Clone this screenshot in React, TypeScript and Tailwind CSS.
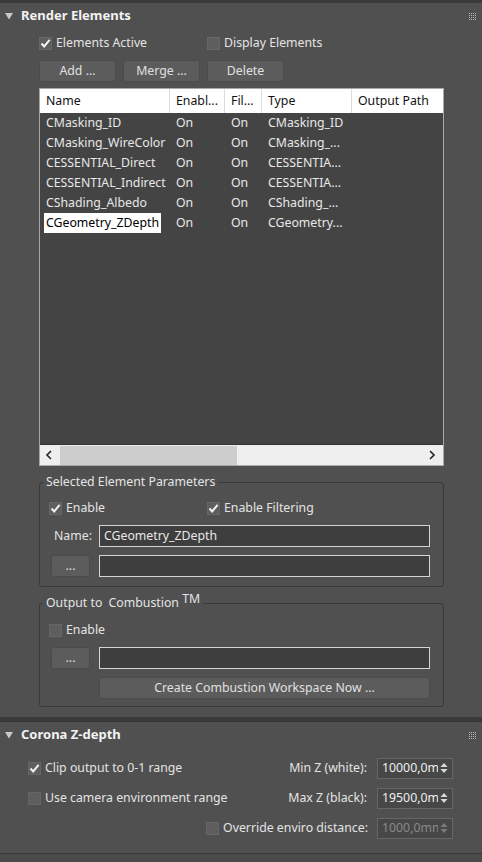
import React from 'react'

const font = { fontFamily: '"Noto Sans", "Open Sans", sans-serif' }

function Check({ checked, disabled }: { checked?: boolean; disabled?: boolean }) {
    return (
        <div className="w-[13px] h-[13px] shrink-0 bg-[#5e5e5e] border border-[#666] flex items-center justify-center">
            {checked && (
                <svg width="11" height="11" viewBox="0 0 11 11">
                    <path d="M1.5 5.5 L4.2 8.4 L9.6 1.8" stroke={disabled ? '#999' : '#f2f2f2'} strokeWidth="2" fill="none" />
                </svg>
            )}
        </div>
    )
}

function CheckRow({ label, checked, className = '' }: { label: string; checked?: boolean; className?: string }) {
    return (
        <div className={`flex items-center gap-[4px] h-[20px] ${className}`}>
            <Check checked={checked} />
            <span className="text-[12.3px] text-[#e4e4e4]">{label}</span>
        </div>
    )
}

function Btn({ label, className = '' }: { label: string; className?: string }) {
    return (
        <div className={`h-[22px] bg-[#5c5c5c] border border-[#4b4b4b] rounded-[3px] flex items-center justify-center text-[12.3px] text-[#e0e0e0] ${className}`}>
            {label}
        </div>
    )
}

function TextBox({ value = '', className = '' }: { value?: string; className?: string }) {
    return (
        <div className={`h-[22px] bg-[#3e3e3e] border border-[#d4d4d4] flex items-center px-[4px] text-[12.3px] text-[#e8e8e8] ${className}`}>
            {value}
        </div>
    )
}

function Spinner({ value, disabled }: { value: string; disabled?: boolean }) {
    return (
        <div className={`w-[76px] h-[21px] bg-[#474747] border border-[#666] flex items-center pl-[4px] pr-[4px] ${disabled ? 'text-[#8a8a8a]' : 'text-[#eeeeee]'}`}>
            <span className="flex-1 overflow-hidden whitespace-nowrap text-[12.3px]">{value}</span>
            <svg width="8" height="12" viewBox="0 0 8 12" className="shrink-0 ml-[2px]">
                <path d="M0.5 5 L4 1 L7.5 5 Z M0.5 7 L4 11 L7.5 7 Z" fill={disabled ? '#7a7a7a' : '#d8d8d8'} />
            </svg>
        </div>
    )
}

function Header({ title }: { title: string }) {
    return (
        <div className="h-[26px] flex items-center pl-[5px] pr-[6px] shrink-0">
            <svg width="8" height="7" viewBox="0 0 8 7" className="shrink-0">
                <path d="M0 0 L8 0 L4 6.5 Z" fill="#c8c8c8" />
            </svg>
            <span className="ml-[8px] text-[13px] font-bold text-[#f2f2f2] flex-1">{title}</span>
            <div className="grid grid-cols-4 gap-[1px]">
                {Array.from({ length: 16 }).map((_, i) => (
                    <div key={i} className="w-[1px] h-[1px] bg-[#bdbdbd]" />
                ))}
            </div>
        </div>
    )
}

const rows = [
    ['CMasking_ID', 'On', 'On', 'CMasking_ID'],
    ['CMasking_WireColor', 'On', 'On', 'CMasking_...'],
    ['CESSENTIAL_Direct', 'On', 'On', 'CESSENTIA...'],
    ['CESSENTIAL_Indirect', 'On', 'On', 'CESSENTIA...'],
    ['CShading_Albedo', 'On', 'On', 'CShading_...'],
    ['CGeometry_ZDepth', 'On', 'On', 'CGeometry...'],
]

const cols = 'grid grid-cols-[130px_55px_37px_90px_1fr]'

export default function App() {
    return (
        <div className="w-[482px] h-[862px] bg-[#505050] flex flex-col overflow-hidden" style={font}>
            <div className="h-[3px] bg-[#3a3a3a] shrink-0" />

            {/* Render Elements rollout */}
            <Header title="Render Elements" />
            <div className="flex items-center mt-[4px] pl-[39px]">
                <CheckRow label="Elements Active" checked className="w-[168px]" />
                <CheckRow label="Display Elements" />
            </div>
            <div className="flex gap-[7px] mt-[7px] pl-[39px]">
                <Btn label="Add ..." className="w-[77px]" />
                <Btn label="Merge ..." className="w-[77px]" />
                <Btn label="Delete" className="w-[77px]" />
            </div>

            <div className="mt-[6px] ml-[39px] w-[405px] h-[378px] border border-[#a8a8a8] flex flex-col bg-[#444444] shrink-0">
                <div className={`${cols} h-[24px] bg-white text-[12.3px] text-[#111]`}>
                    {['Name', 'Enabl...', 'Fil...', 'Type', 'Output Path'].map((h, i) => (
                        <div key={h} className={`flex items-center pl-[6px] ${i < 4 ? 'border-r border-[#dcdcdc]' : ''}`}>{h}</div>
                    ))}
                </div>
                <div className="flex-1">
                    {rows.map((r, ri) => (
                        <div key={r[0]} className={`${cols} h-[20px] text-[12.3px] text-[#e8e8e8]`}>
                            {r.map((c, ci) => (
                                <div key={ci} className="flex items-center whitespace-nowrap">
                                    {ci === 0 && ri === rows.length - 1 ? (
                                        <span className="ml-[4px] px-[2px] h-[20px] flex items-center bg-white text-black">{c}</span>
                                    ) : (
                                        <span className="pl-[6px]">{c}</span>
                                    )}
                                </div>
                            ))}
                        </div>
                    ))}
                </div>
                <div className="h-[21px] bg-[#efefef] border-t border-[#333] flex items-center">
                    <svg width="20" height="20" viewBox="0 0 20 20" className="shrink-0">
                        <path d="M11 6 L7 10 L11 14" stroke="#222" strokeWidth="1.6" fill="none" />
                    </svg>
                    <div className="w-[177px] h-[19px] bg-[#cdcdcd]" />
                    <div className="flex-1" />
                    <svg width="20" height="20" viewBox="0 0 20 20" className="shrink-0 mr-[1px]">
                        <path d="M8 6 L12 10 L8 14" stroke="#222" strokeWidth="1.6" fill="none" />
                    </svg>
                </div>
            </div>

            <fieldset className="mt-[8px] ml-[39px] w-[405px] border border-[#3a3a3a] rounded-[3px] pb-[9px]">
                <legend className="ml-[3px] px-[3px] text-[12.3px] leading-[16px] text-[#e4e4e4]">Selected Element Parameters</legend>
                <div className="flex items-center mt-[8px] pl-[9px]">
                    <CheckRow label="Enable" checked className="w-[158px]" />
                    <CheckRow label="Enable Filtering" checked />
                </div>
                <div className="flex items-center mt-[7px]">
                    <span className="w-[59px] text-right pr-[7px] text-[12.3px] text-[#e4e4e4]">Name:</span>
                    <TextBox value="CGeometry_ZDepth" className="w-[331px]" />
                </div>
                <div className="flex items-center mt-[8px] pl-[11px] gap-[9px]">
                    <Btn label="..." className="w-[39px]" />
                    <TextBox className="w-[331px]" />
                </div>
            </fieldset>

            <fieldset className="mt-[8px] ml-[39px] w-[405px] border border-[#3a3a3a] rounded-[3px] pb-[7px]">
                <legend className="ml-[3px] px-[3px] text-[12.3px] leading-[16px] text-[#e4e4e4]">
                    Output to <span className="ml-[3px]">Combustion</span> <span className="relative top-[-4px]">TM</span>
                </legend>
                <div className="flex items-center mt-[9px] pl-[9px]">
                    <CheckRow label="Enable" />
                </div>
                <div className="flex items-center mt-[7px] pl-[11px] gap-[9px]">
                    <Btn label="..." className="w-[39px]" />
                    <TextBox className="w-[331px]" />
                </div>
                <div className="mt-[8px] pl-[59px]">
                    <Btn label="Create Combustion Workspace Now ..." className="w-[331px]" />
                </div>
            </fieldset>

            <div className="mt-[10px] h-[5px] bg-[#3b3b3b] border-b border-[#333] shrink-0" />

            {/* Corona Z-depth rollout */}
            <Header title="Corona Z-depth" />
            <div className="mt-[5px] flex flex-col">
                <div className="h-[30px] flex items-center justify-between pl-[28px] pr-[29px]">
                    <CheckRow label="Clip output to 0-1 range" checked />
                    <div className="flex items-center gap-[10px]">
                        <span className="text-[12.3px] text-[#e4e4e4]">Min Z (white):</span>
                        <Spinner value="10000,0mm" />
                    </div>
                </div>
                <div className="h-[30px] flex items-center justify-between pl-[28px] pr-[29px]">
                    <CheckRow label="Use camera environment range" />
                    <div className="flex items-center gap-[10px]">
                        <span className="text-[12.3px] text-[#e4e4e4]">Max Z (black):</span>
                        <Spinner value="19500,0mm" />
                    </div>
                </div>
                <div className="h-[30px] flex items-center justify-end pr-[29px]">
                    <div className="flex items-center gap-[9px]">
                        <CheckRow label="Override enviro distance:" />
                        <Spinner value="1000,0mm" disabled />
                    </div>
                </div>
            </div>
            <div className="mt-[10px] border-t border-[#3a3a3a] flex-1 bg-[#4a4a4a]" />
        </div>
    )
}
